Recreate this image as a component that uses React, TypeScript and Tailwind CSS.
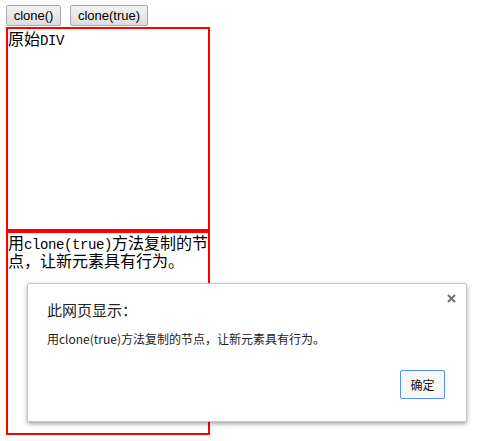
const cjk = "font-['Noto_Sans_CJK_SC',sans-serif]";

function Mono({ children }: { children: React.ReactNode }) {
  return (
    <span className="font-['Liberation_Mono','DejaVu_Sans_Mono',monospace] text-[14px] leading-[10px] tracking-[-0.41px]">
      {children}
    </span>
  );
}

export default function App() {
  return (
    <div className="relative w-full h-[441px] bg-white overflow-hidden">
      {/* page */}
      <div className="flex flex-col pl-[6px] pt-[5px]">
        <div className="flex gap-[9px] font-['Liberation_Sans',Arial,sans-serif] text-[13px] text-black">
          <button className="w-[55px] h-[21px] flex items-center justify-center rounded-[2px] border border-[#a9a9a9] bg-gradient-to-b from-[#f2f2f2] to-[#dddddd] leading-none">
            clone()
          </button>
          <button className="w-[78px] h-[21px] flex items-center justify-center rounded-[2px] border border-[#a9a9a9] bg-gradient-to-b from-[#f2f2f2] to-[#dddddd] leading-none">
            clone(true)
          </button>
        </div>
        <div className={`mt-[1px] w-[204px] h-[204px] border-2 border-[#ff0000] text-[16px] leading-[18px] text-black ${cjk}`}>
          原始<Mono>DIV</Mono>
        </div>
        <div className={`w-[204px] h-[204px] border-2 border-[#ff0000] text-[16px] leading-[18px] text-black ${cjk}`}>
          用<Mono>clone(true)</Mono>方法复制的节点，让新元素具有行为。
        </div>
      </div>

      {/* alert dialog */}
      <div className={`absolute left-[27px] top-[283px] w-[440px] flex flex-col bg-white border border-[#c6c6c6] rounded-[2px] shadow-[0_2px_4px_rgba(0,0,0,0.35)] pl-[19px] pr-[21px] pt-[16px] pb-[22px] text-[#222] ${cjk}`}>
        <svg className="absolute right-[10px] top-[10px]" width="9" height="9" viewBox="0 0 9 9">
          <path d="M1 1 L8 8 M8 1 L1 8" stroke="#707070" strokeWidth="2" />
        </svg>
        <div className="text-[15px] leading-[20px] text-[#222]">此网页显示：</div>
        <div className="mt-[11px] text-[12px] leading-[16px] text-[#222]">
          用clone(true)方法复制的节点，让新元素具有行为。
        </div>
        <div className="mt-[23px] flex justify-end">
          <button className="w-[45px] h-[29px] flex items-center justify-center rounded-[2px] border border-[#4d90fe] bg-[#f8f8f8] text-[12px] leading-none text-[#111]">
            确定
          </button>
        </div>
      </div>
    </div>
  );
}
